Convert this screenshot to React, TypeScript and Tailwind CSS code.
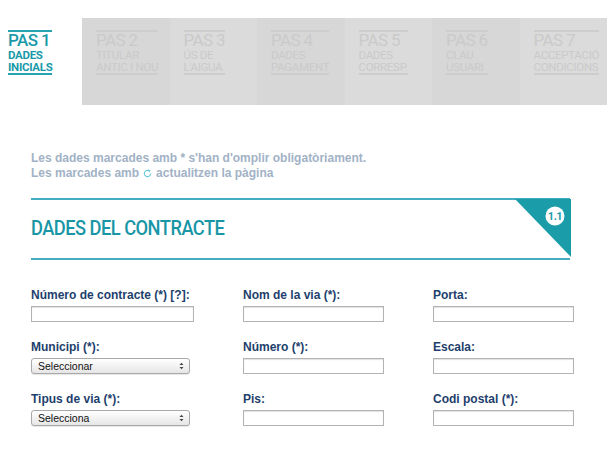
import React from "react";

const steps = [
  ["PAS 2", "TITULAR", "ANTIC I NOU"],
  ["PAS 3", "ÚS DE", "L'AIGUA"],
  ["PAS 4", "DADES", "PAGAMENT"],
  ["PAS 5", "DADES", "CORRESP."],
  ["PAS 6", "CLAU", "USUARI"],
  ["PAS 7", "ACCEPTACIÓ", "CONDICIONS"],
];

const din = { fontFamily: 'Roboto, "Open Sans", sans-serif' };

function TextInput() {
  return (
    <div className="h-[16px] border border-[#b3b3b3] bg-white shadow-[inset_0_1px_1px_rgba(0,0,0,0.12)]" />
  );
}

function Select({ label }: { label: string }) {
  return (
    <div className="flex h-[16px] w-[159px] items-center justify-between rounded-[3px] border border-[#a9a9a9] bg-gradient-to-b from-white to-[#e6e6e6] pl-[6px] pr-[5px] shadow-[0_1px_1px_rgba(0,0,0,0.1)]">
      <span className="text-[10.5px] leading-none text-[#111]" style={{ fontFamily: '"Liberation Sans", Arial, sans-serif' }}>
        {label}
      </span>
      <svg width="5" height="8" viewBox="0 0 5 8">
        <path d="M0.5 3 L2.5 0.8 L4.5 3 Z M0.5 5 L2.5 7.2 L4.5 5 Z" fill="#444" />
      </svg>
    </div>
  );
}

function Field({ label, children }: { label: string; children: React.ReactNode }) {
  return (
    <div className="flex flex-col">
      <div className="h-[14px] text-[12px] font-bold leading-[14px] text-[#1e3f6c]">{label}</div>
      <div className="mt-[4px]">{children}</div>
    </div>
  );
}

export default function App() {
  return (
    <div className="h-[454px] w-[609px] overflow-hidden bg-white" style={{ fontFamily: '"Liberation Sans", Arial, sans-serif' }}>
      {/* Steps bar */}
      <div className="mt-[18px] flex h-[87px]">
        <div className="w-[82px] pl-[8px] pt-[12px]">
          <div className="inline-block border-y-2 border-[#27a3b1] text-[#1a9aa8]" style={din}>
            <div className="text-[17px] font-medium leading-[17px] tracking-[-0.6px]">PAS 1</div>
            <div className="text-[11.5px] font-bold leading-[12px] tracking-[-0.3px]">DADES</div>
            <div className="text-[11.5px] font-bold leading-[12px] tracking-[-0.3px]">INICIALS</div>
          </div>
        </div>
        <div className="grid w-[525px] grid-cols-6">
          {steps.map((s, i) => (
            <div key={i} className={`pl-[14px] pt-[12px] ${i % 2 === 0 ? "bg-[#d7d7d7]" : "bg-[#dbdbdb]"}`}>
              <div className="inline-block border-y-2 border-[#cdcdcd] text-[#cacaca]" style={din}>
                <div className="text-[17px] leading-[17px] tracking-[-0.6px]">{s[0]}</div>
                <div className="text-[11.5px] leading-[12px] tracking-[-0.3px]">{s[1]}</div>
                <div className="text-[11.5px] leading-[12px] tracking-[-0.3px]">{s[2]}</div>
              </div>
            </div>
          ))}
        </div>
      </div>

      {/* Intro */}
      <div className="ml-[31px] mt-[46px] text-[12px] font-bold leading-[15px] text-[#a2b2c6]">
        <div>Les dades marcades amb * s'han d'omplir obligatòriament.</div>
        <div className="flex items-center">
          <span>Les marcades amb</span>
          <svg className="mx-[4px]" width="9" height="9" viewBox="0 0 10 10">
            <path d="M8.5 5 A3.5 3.5 0 1 1 6.8 2" fill="none" stroke="#6ccbd8" strokeWidth="1.3" />
            <path d="M5.6 0.4 L8.6 1.6 L6.6 4 Z" fill="#6ccbd8" />
          </svg>
          <span>actualitzen la pàgina</span>
        </div>
      </div>

      {/* Section header */}
      <div className="relative ml-[31px] mt-[17px] w-[539px]">
        <div className="h-[2px] bg-[#44adc0]" />
        <div className="flex h-[58px] items-center">
          <h2 className="origin-left scale-x-[0.87] whitespace-nowrap text-[21px] font-medium tracking-[-0.6px] text-[#1896a6]" style={din}>
            DADES DEL CONTRACTE
          </h2>
        </div>
        <div className="h-[2px] bg-[#44adc0]" />
        <svg className="absolute right-[-1px] top-[1px]" width="56" height="58" viewBox="0 0 56 58">
          <polygon points="0,0 56,0 56,58" fill="#1a9ca9" />
          <circle cx="40" cy="17" r="9.5" fill="white" />
          <text x="40" y="21" textAnchor="middle" fontSize="11" fontWeight="bold" fill="#1a9ca9" letterSpacing="-0.5" style={din}>
            1.1
          </text>
        </svg>
      </div>

      {/* Form */}
      <div className="ml-[31px] mt-[28px] grid grid-cols-[212px_190px_141px] gap-y-[18px]">
        <Field label="Número de contracte (*) [?]:">
          <div className="w-[163px]"><TextInput /></div>
        </Field>
        <Field label="Nom de la via (*):">
          <div className="w-[141px]"><TextInput /></div>
        </Field>
        <Field label="Porta:">
          <div className="w-[141px]"><TextInput /></div>
        </Field>

        <Field label="Municipi (*):">
          <Select label="Seleccionar" />
        </Field>
        <Field label="Número (*):">
          <div className="w-[141px]"><TextInput /></div>
        </Field>
        <Field label="Escala:">
          <div className="w-[141px]"><TextInput /></div>
        </Field>

        <Field label="Tipus de via (*):">
          <Select label="Selecciona" />
        </Field>
        <Field label="Pis:">
          <div className="w-[141px]"><TextInput /></div>
        </Field>
        <Field label="Codi postal (*):">
          <div className="w-[141px]"><TextInput /></div>
        </Field>
      </div>
    </div>
  );
}
